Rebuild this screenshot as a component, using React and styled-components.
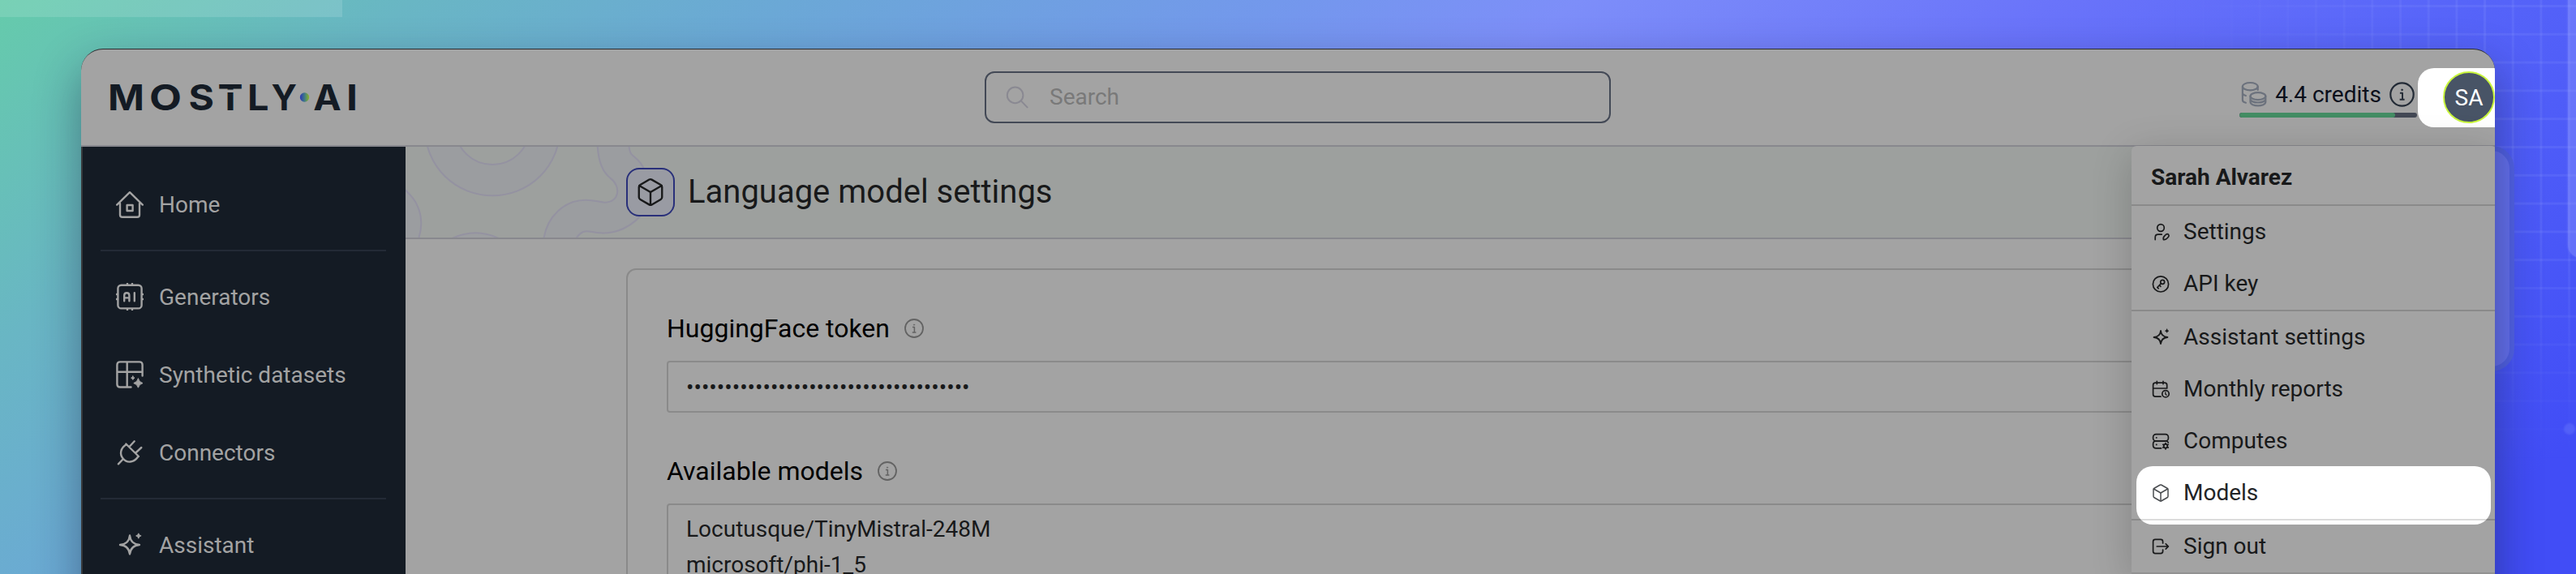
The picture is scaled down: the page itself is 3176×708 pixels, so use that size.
import React from "react";
import styled, { createGlobalStyle, css } from "styled-components";
import { Box } from "lucide-react";

const GlobalStyle = createGlobalStyle`
  * { box-sizing: border-box; }
  body { margin: 0; overflow: hidden; font-family: Roboto, "Liberation Sans", sans-serif; }
`;

const Backdrop = styled.div`
  position: relative;
  width: 3176px;
  height: 708px;
  overflow: hidden;
  padding: 60px 100px 0;
  background: linear-gradient(
    140deg,
    #65cbab 0%,
    #69b6c4 12.6%,
    #6ba8d6 24.2%,
    #7398ec 39.3%,
    #7d8ef9 48.4%,
    #6a74fa 63%,
    #5664f9 76%,
    #4957f7 87.5%,
    #414df6 95%
  );
`;

const Strip = styled.div`
  position: absolute;
  left: 0;
  top: 0;
  width: 422px;
  height: 20.5px;
  background: rgba(255, 255, 255, 0.13);
`;

const GridDecor = styled.div`
  position: absolute;
  right: 0;
  top: 0;
  width: 500px;
  height: 570px;
  background-image:
    linear-gradient(90deg, rgba(150, 165, 255, 0.15) 3px, transparent 3px),
    linear-gradient(rgba(150, 165, 255, 0.15) 3px, transparent 3px);
  background-size: 34.7px 34.8px;
  background-position: 4.5px 6px;
  mask-image: linear-gradient(90deg, transparent, #000 70%), linear-gradient(#000 50%, transparent);
  mask-composite: intersect;
`;

const Glow = styled.div`
  position: absolute;
  right: 76px;
  top: 180px;
  width: 60px;
  height: 278px;
  border-radius: 28px;
  background: #6470ee;
  border: 6px solid #5161e4;
`;

const EdgePanel = styled.div`
  position: absolute;
  right: -40px;
  top: -40px;
  width: 50px;
  height: 358px;
  border-radius: 16px;
  background: rgba(150, 160, 255, 0.36);
  box-shadow: 0 0 3px rgba(150, 160, 255, 0.4);
`;

const Node = styled.div`
  position: absolute;
  right: 1px;
  top: 522px;
  width: 14px;
  height: 14px;
  border-radius: 50%;
  background: rgba(120, 135, 255, 0.3);
  filter: blur(1px);
`;

const Window = styled.div`
  position: relative;
  width: 2976px;
  height: 760px;
  overflow: hidden;
  border-top: 1px solid #2c2d30;
  border-radius: 27px 27px 0 0;
  background: #a3a3a3;
  box-shadow: 0 24px 56px rgba(20, 25, 50, 0.42);
`;

const Header = styled.header`
  display: grid;
  grid-template-columns: 1114px 772px 1fr;
  align-items: center;
  height: 120px;
  border-bottom: 2px solid #88888e;
`;

const Logo = styled.svg`
  display: block;
  margin-left: 30px;
  width: 320px;
  height: 44px;
  overflow: visible;
  font-family: Inter, sans-serif;
  font-size: 44px;
  font-weight: 700;
`;

const SearchField = styled.div`
  display: flex;
  align-items: center;
  gap: 25px;
  height: 64px;
  padding-left: 23px;
  border: 2px solid #434956;
  border-radius: 12px;
  color: #797979;
  font-size: 28px;
  line-height: 34px;
`;

const Account = styled.div`
  display: flex;
  justify-content: flex-end;
  align-items: center;
  gap: 1px;
`;

const Credits = styled.div`
  display: flex;
  flex-direction: column;
  gap: 7px;
  width: 219px;
  padding-top: 5px;
`;

const CreditsLine = styled.div`
  display: flex;
  align-items: center;
  justify-content: space-between;
  height: 32px;
  padding: 0 3px 0 2px;
  color: #0b0f1b;
  font-size: 28px;
`;

const Meter = styled.div`
  height: 6px;
  border-radius: 3px;
  overflow: hidden;
  background: #434854;
`;

const MeterFill = styled.div`
  width: 87.5%;
  height: 100%;
  border-radius: 3px;
  background: #438c63;
`;

const AvatarSpot = styled.div`
  display: flex;
  align-items: center;
  justify-content: flex-end;
  width: 95px;
  height: 73px;
  border-radius: 20px 0 0 20px;
  background: #fff;
`;

const Avatar = styled.div`
  display: flex;
  align-items: center;
  justify-content: center;
  width: 64px;
  height: 64px;
  border: 2px solid #c8f53c;
  border-radius: 50%;
  background: #485466;
  color: #fff;
  font-size: 28px;
`;

const Body = styled.div`
  display: flex;
  height: 640px;
`;

const Sidebar = styled.nav`
  flex: none;
  width: 400px;
  padding: 23px 24px 0 22px;
  border-left: 2px solid #37393c;
  background: #141b24;
`;

const NavItem = styled.div`
  display: flex;
  align-items: center;
  gap: 19px;
  height: 96px;
  padding-left: 19px;
  color: #a3a3a3;
  font-size: 28px;
`;

const NavRule = styled.div`
  height: 2px;
  margin: 8px 0;
  background: #232a36;
`;

const Main = styled.main`
  flex: 1;
  min-width: 0;
`;

const TitleBar = styled.div`
  position: relative;
  display: flex;
  align-items: center;
  gap: 16px;
  height: 114px;
  padding-left: 272px;
  border-bottom: 2px solid #88888e;
  background: #9da09e;
`;

const Swirl = styled.svg`
  position: absolute;
  left: 0;
  top: 0;
  width: 338px;
  height: 112px;
`;

const TitleIcon = styled.div`
  position: relative;
  display: flex;
  align-items: center;
  justify-content: center;
  width: 60px;
  height: 60px;
  border: 2px solid #29307a;
  border-radius: 16px;
  background: #999ba3;
  color: #18191a;
`;

const Title = styled.h1`
  margin: 0 0 2px;
  color: #18191a;
  font-size: 40px;
  font-weight: 400;
`;

const Card = styled.section`
  margin: 36px 100px 0 272px;
  height: 600px;
  padding: 48px;
  border: 2px solid #8a8a8a;
  border-radius: 12px;
`;

const Label = styled.div`
  display: flex;
  align-items: center;
  gap: 18px;
  height: 48px;
  margin-bottom: 16px;
  color: #000;
  font-size: 32px;
`;

const TokenInput = styled.div`
  display: flex;
  align-items: center;
  height: 64px;
  margin-bottom: 48px;
  padding-left: 22px;
  border: 2px solid #8a8a8a;
  border-radius: 4px;
  color: #18191a;
  font-size: 28px;
`;

const ModelList = styled.div`
  height: 300px;
  padding: 8px 22px;
  border: 2px solid #8a8a8a;
  border-radius: 4px;
  color: #18191a;
  font-size: 28px;
  line-height: 44px;
`;

const Menu = styled.div`
  position: absolute;
  right: 0;
  top: 119px;
  width: 448px;
  padding-top: 1px;
  border-radius: 6px 4px 0 0;
  border-bottom: 2px solid #919191;
  background: #a3a3a3;
  color: #18191a;
  font-size: 28px;
  box-shadow: 0 10px 50px rgba(0, 0, 0, 0.19);
`;

const MenuName = styled.div`
  height: 71px;
  padding: 21px 24px 0;
  font-weight: 700;
  line-height: 33px;
`;

const MenuRule = styled.div`
  height: 2px;
  background: #8a8a8a;
`;

const MenuItem = styled.div`
  position: relative;
  display: flex;
  align-items: center;
  gap: 16px;
  height: 64px;
  padding-left: 24px;
  svg { position: relative; }
  span { position: relative; padding-bottom: 2px; }
  ${(p) =>
    p.$active &&
    css`
      color: #232527;
      &::before {
        content: "";
        position: absolute;
        left: 6px;
        top: -1px;
        width: 437px;
        height: 72px;
        border-radius: 20px;
        background: linear-gradient(#fff 65px, #dcdcdc 65px, #dcdcdc 67px, #fff 67px);
      }
    `}
`;

const Stroke = styled.svg.attrs({ fill: "none", stroke: "currentColor", strokeLinecap: "round", strokeLinejoin: "round" })`
  flex: none;
  display: block;
  color: ${(p) => p.$tone || "inherit"};
`;

const NavIcon = ({ children }) => (
  <Stroke width="34" height="34" viewBox="0 0 34 34" strokeWidth="2.4">{children}</Stroke>
);

const MenuIcon = ({ children }) => (
  <Stroke width="24" height="24" viewBox="0 0 24 24" strokeWidth="1.7">{children}</Stroke>
);

const HomeIcon = () => (
  <NavIcon>
    <path d="M1.2 17.6 17 2.2l15.800 15.400M5 16v14q0 2.800 2.800 2.800h18.400q2.800 0 2.800-2.800V16" />
    <rect x="13.600" y="18" width="7" height="7" />
  </NavIcon>
);

const ChipIcon = () => (
  <NavIcon>
    <rect x="2.400" y="2.800" width="29.200" height="28.600" rx="4" />
    <path d="M14 .9v1M20 .9v1M14 32.400v.8M20 32.400v.8M.8 14h1M.8 20h1M32.400 14h.8M32.400 20h.8" />
    <path d="M10.200 22.300v-6.800q0-3.200 3.100-3.200t3.100 3.200v6.800M10.200 18.400h6.200M22.800 12.300v10" />
  </NavIcon>
);

const DatasetIcon = () => (
  <NavIcon>
    <path d="M18.500 32.500H5q-3.600 0-3.600-3.600V5q0-3.600 3.600-3.600h24q3.600 0 3.600 3.600v13.500M13.700 1.400v31M1.400 13.800h31.200" />
    <path fill="currentColor" strokeWidth="1" d="M27.400 22q1.200 4.400 5.600 5.600-4.400 1.200-5.600 5.600-1.200-4.400-5.600-5.600 4.400-1.200 5.600-5.600ZM20.800 19q.5 1.700 2.200 2.200-1.700.5-2.200 2.200-.5-1.700-2.200-2.200 1.700-.5 2.200-2.200Z" />
  </NavIcon>
);

const PlugIcon = () => (
  <NavIcon>
    <path d="M2.900 31.300 9 25M12.300 6.500 28 22M16.500 10 22.700 3.300M23.800 18 31.300 11M13 7C5.500 11.500 4 19 8.800 24.800S22 29.800 27.300 22.200" />
  </NavIcon>
);

const SparkleShape = () => (
  <>
    <path d="M17 5.500q1 10.500 12 11.500-11 1-12 11.500-1-10.500-12-11.500 11-1 12-11.500Z" />
    <path fill="currentColor" strokeWidth="1.2" d="M27.800 3q.5 2.400 2.900 2.900-2.400.5-2.900 2.900-.5-2.400-2.900-2.900 2.400-.5 2.900-2.900Z" />
  </>
);

const InfoIcon = ({ size, tone, weight = 1.8 }) => (
  <Stroke width={size} height={size} viewBox="0 0 24 24" strokeWidth={weight} $tone={tone}>
    <circle cx="12" cy="12" r="11" />
    <path strokeWidth="1.500" strokeLinecap="butt" d="M10 10.600h2.400v6M9.800 16.900h4.600" />
    <circle cx="12" cy="7.600" r=".7" fill="currentColor" strokeWidth=".6" />
  </Stroke>
);

const SearchIcon = () => (
  <Stroke width="30" height="30" viewBox="0 0 30 30" strokeWidth="2" $tone="#8a8992">
    <circle cx="12.600" cy="12.400" r="9.800" />
    <path d="m19.800 19.400 7.800 8" />
  </Stroke>
);

const CoinsIcon = () => (
  <Stroke width="32" height="32" viewBox="0 0 32 32" strokeWidth="2.2" $tone="#6c727d">
    <ellipse cx="11.300" cy="6.700" rx="9.400" ry="4.700" />
    <path d="M1.900 7v16.500q0 2.300 4 3.200M1.900 14.800q0 2.300 4 3.200M20.700 7v4" />
    <ellipse cx="20.900" cy="18.600" rx="9.400" ry="4.500" />
    <path d="M11.500 18.600v7.200c0 6 18.800 6 18.800 0v-7.200M11.500 22c0 6 18.800 6 18.800 0" />
  </Stroke>
);

const logoLetters = [
  ["M", 3, 45],
  ["O", 54, 40],
  ["S", 102.500, 31.500],
  ["T", 138.500, 31],
  ["L", 175, 26.500],
  ["Y", 204.500, 31.500],
  ["A", 256.200, 34.500],
  ["I", 297, 14],
];

const LogoMark = () => (
  <Logo viewBox="0 0 320 44">
    <defs>
      <linearGradient id="dot">
        <stop offset="0" stopColor="#2c35b5" />
        <stop offset=".5" stopColor="#3f7a86" />
        <stop offset="1" stopColor="#8cb526" />
      </linearGradient>
    </defs>
    {logoLetters.map(([letter, x, width]) => (
      <text key={letter} x={x} y="38" textLength={width} lengthAdjust="spacingAndGlyphs" fill="#141b24">
        {letter}
      </text>
    ))}
    <rect x="138" y="12.600" width="32" height="3.400" fill="#a3a3a3" />
    <circle cx="245.500" cy="22" r="5.700" fill="url(#dot)" />
  </Logo>
);

const SwirlPattern = () => (
  <Swirl viewBox="59 33 1000 336" preserveAspectRatio="none" fill="#9b9da0" stroke="#9492a1" strokeWidth="6">
    <ellipse cx="376" cy="-30" rx="245" ry="244" />
    <ellipse cx="376" cy="-30" rx="133" ry="129" fill="#9da09e" />
    <path d="M50 186C95 222 116 265 116 318Q116 345 106 375L50 380Z" />
    <path d="M225 374Q314 330 403 374" />
    <path d="M759 25C762 90 782 130 805 148C848 180 838 240 785 239C760 237 750 230 715 230C640 230 575 290 563 374L680 374C698 345 715 343 735 347C810 364 870 340 920 285L930 118C915 82 900 78 884 62Q875 52 874 25Z" />
  </Swirl>
);

const menuGroups = [
  [
    { label: "Settings", icon: <MenuIcon><circle cx="12" cy="7" r="4.300" /><path d="M5.200 21.600v-2.800q0-3.600 3.600-3.600h4.400M15.400 21.600q-.8-2.600 1.400-4.700l2-1.900q1.500-1 2.700.2 1.200 1.400.1 2.800l-1.800 2q-1.800 1.900-4.400 1.600Z" /></MenuIcon> },
    { label: "API key", icon: <MenuIcon><circle cx="12" cy="12.400" r="9.600" /><circle cx="14.200" cy="9.800" r="2.500" /><path d="m12.400 11.700-4.600 4.800 1.500 1.300M10.500 13.800l1.400 1.500" /></MenuIcon> },
  ],
  [
    { label: "Assistant settings", icon: <Stroke width="24" height="24" viewBox="0 0 34 34" strokeWidth="2.500"><SparkleShape /></Stroke> },
    { label: "Monthly reports", icon: <MenuIcon><path d="M12 21.200H5.500Q2.600 21.200 2.600 18.300V7q0-2.900 2.900-2.900h11.300q2.900 0 2.900 2.900v4M2.600 11h17.100M7.300 2.400v3.200M15 2.400v3.200" /><circle cx="18" cy="17.800" r="4.200" /><path strokeWidth="1.300" d="M17.800 15.800v2.200l1.300 1.200" /></MenuIcon> },
    { label: "Computes", icon: <MenuIcon><rect x="2.600" y="3.600" width="18.800" height="8.400" rx="3.600" /><path d="M12.500 20.900H6.200q-3.600 0-3.600-3.600v-1.700Q2.600 12 6.200 12h11.600q3 0 3.500 2M6.600 7.800h.3M6.600 16.400h.3" /><circle cx="18" cy="18.200" r="2.300" /><path d="M18 14.500v1M18 21v1M14.800 16.300l.9.500M20.300 19.600l.9.500M14.800 20.100l.9-.5M20.300 16.800l.9-.5" /></MenuIcon> },
    { label: "Models", active: true, icon: <Box size={24} strokeWidth={1.5} color="#4a4d50" /> },
  ],
  [
    { label: "Sign out", icon: <MenuIcon><path d="M14.600 8V6q0-2.600-2.600-2.600H5.200Q2.600 3.400 2.600 6v12q0 2.600 2.600 2.600H12q2.600 0 2.600-2.600v-2M7.300 12h14M18.200 8.800l3.200 3.200-3.200 3.200" /></MenuIcon> },
  ],
];

export default function App() {
  return (
    <Backdrop>
      <GlobalStyle />
      <Strip />
      <GridDecor />
      <Glow />
      <EdgePanel />
      <Node />
      <Window>
        <Header>
          <LogoMark />
          <SearchField>
            <SearchIcon />
            Search
          </SearchField>
          <Account>
            <Credits>
              <CreditsLine>
                <CoinsIcon />
                4.4 credits
                <InfoIcon size={31} tone="#232b36" weight={1.7} />
              </CreditsLine>
              <Meter><MeterFill /></Meter>
            </Credits>
            <AvatarSpot><Avatar>SA</Avatar></AvatarSpot>
          </Account>
        </Header>
        <Body>
          <Sidebar>
            <NavItem><HomeIcon />Home</NavItem>
            <NavRule />
            <NavItem><ChipIcon />Generators</NavItem>
            <NavItem><DatasetIcon />Synthetic datasets</NavItem>
            <NavItem><PlugIcon />Connectors</NavItem>
            <NavRule />
            <NavItem><NavIcon><SparkleShape /></NavIcon>Assistant</NavItem>
          </Sidebar>
          <Main>
            <TitleBar>
              <SwirlPattern />
              <TitleIcon><Box size={38} strokeWidth={1.5} /></TitleIcon>
              <Title>Language model settings</Title>
            </TitleBar>
            <Card>
              <Label>HuggingFace token<InfoIcon size={24} tone="#636363" /></Label>
              <TokenInput>{"•".repeat(37)}</TokenInput>
              <Label>Available models<InfoIcon size={24} tone="#636363" /></Label>
              <ModelList>
                <div>Locutusque/TinyMistral-248M</div>
                <div>microsoft/phi-1_5</div>
              </ModelList>
            </Card>
          </Main>
        </Body>
        <Menu>
          <MenuName>Sarah Alvarez</MenuName>
          {menuGroups.map((group, i) => (
            <React.Fragment key={i}>
              <MenuRule />
              {group.map((item) => (
                <MenuItem key={item.label} $active={item.active}>
                  {item.icon}
                  <span>{item.label}</span>
                </MenuItem>
              ))}
            </React.Fragment>
          ))}
        </Menu>
      </Window>
    </Backdrop>
  );
}
